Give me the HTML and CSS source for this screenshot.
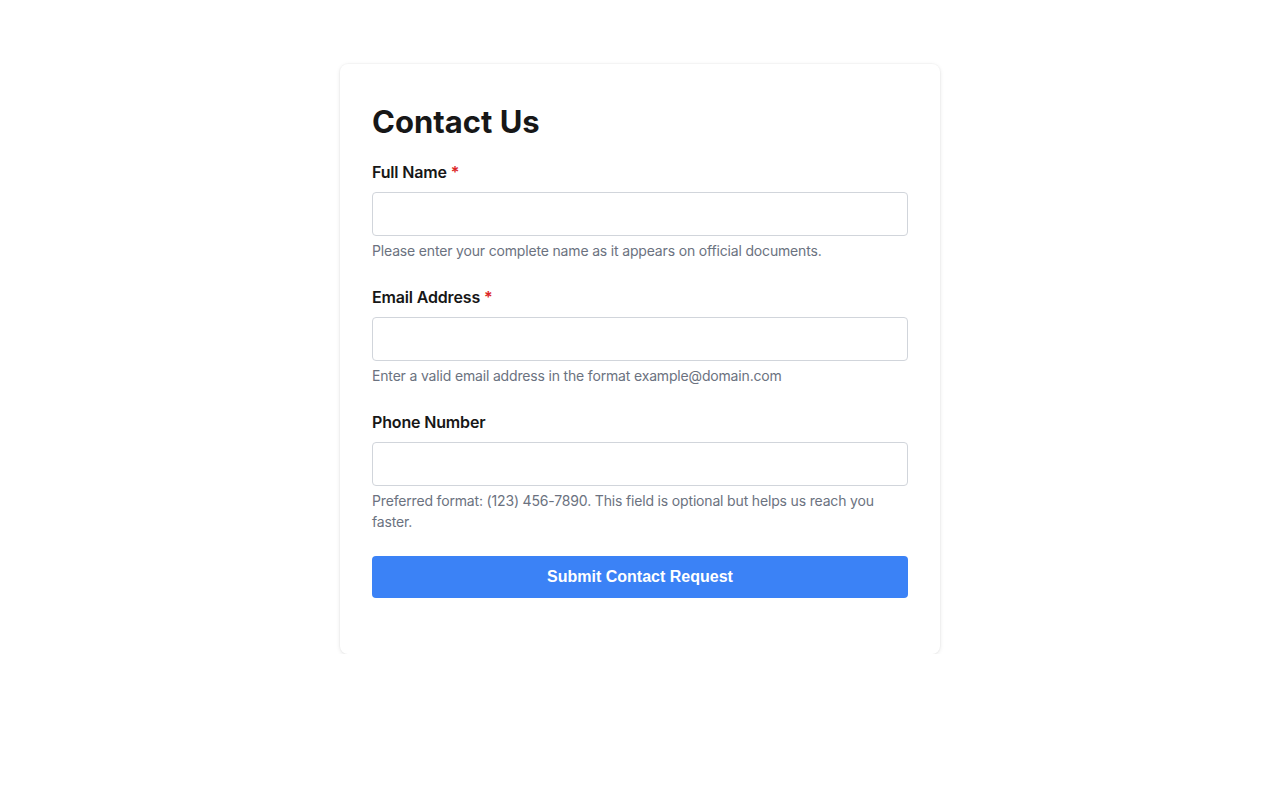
FILE: index.html
```html
<!DOCTYPE html>
<html>
<head>
     <title>Contact Us</title>
     <link rel="stylesheet" href="styles.css">
</head>
<body>
     <div class="card">
          <h1 class="title">Contact Us</h1>
          <form class="form" onsubmit="return false">
               <div class="group">
                    <label class="label" for="name">Full Name <span class="req">*</span></label>
                    <input class="input" id="name" type="text">
                    <p class="help">Please enter your complete name as it appears on official documents.</p>
               </div>
               <div class="group">
                    <label class="label" for="email">Email Address <span class="req">*</span></label>
                    <input class="input" id="email" type="email">
                    <p class="help">Enter a valid email address in the format example@domain.com</p>
               </div>
               <div class="group">
                    <label class="label" for="phone">Phone Number</label>
                    <input class="input" id="phone" type="tel">
                    <p class="help">Preferred format: (123) 456-7890. This field is optional but helps us reach you faster.</p>
               </div>
               <button class="submit" type="submit">Submit Contact Request</button>
          </form>
     </div>
</body>
</html>
```

FILE: styles.css
```css
body {
     margin: 0;
     background: #ffffff;
     font-family: Inter, "Noto Sans", sans-serif;
     color: #111111;
}

.card {
     width: 600px;
     box-sizing: border-box;
     margin: 64px auto 0;
     padding: 40px 32px 32px;
     background: #ffffff;
     border-radius: 8px;
     box-shadow: 0 1px 4px rgba(0, 0, 0, 0.1), 0 0 0 1px rgba(0, 0, 0, 0.02);
}

.title {
     margin: 0 0 20px;
     font-size: 31px;
     line-height: 36px;
     font-weight: 700;
     color: #171717;
}

.form {
     display: flex;
     flex-direction: column;
}

.group {
     display: flex;
     flex-direction: column;
     margin-bottom: 24px;
}

.label {
     font-size: 16px;
     line-height: 24px;
     font-weight: 600;
     letter-spacing: -0.01em;
     margin-bottom: 8px;
     color: #171717;
}

.req {
     color: #dc2626;
}

.input {
     height: 44px;
     box-sizing: border-box;
     border: 1px solid #d1d5db;
     border-radius: 4px;
     padding: 0 12px;
     font-family: inherit;
     font-size: 16px;
}

.help {
     margin: 4px 0 0;
     font-size: 14px;
     line-height: 21px;
     letter-spacing: -0.012em;
     color: #6b7280;
}

.submit {
     height: 42px;
     margin-bottom: 24px;
     border: none;
     border-radius: 4px;
     background: #3b82f6;
     color: #ffffff;
     font-family: "Liberation Sans", Arial, sans-serif;
     font-size: 16px;
     font-weight: 700;
}
```
